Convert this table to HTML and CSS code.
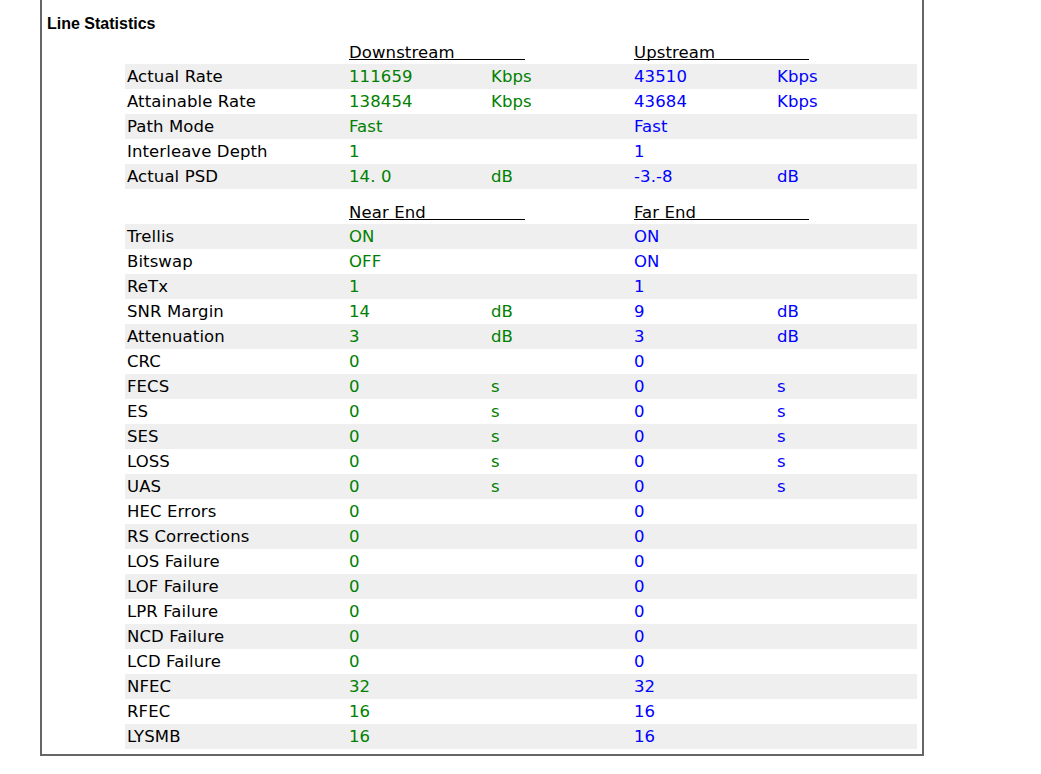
FILE: index.html
```html
<!DOCTYPE html>
<html>
<head>
<meta charset="utf-8">
<title>Line Statistics</title>
<link rel="stylesheet" href="styles.css">
</head>
<body>
<div class="frame">
  <div class="title">Line Statistics</div>
  <table class="stats">
    <colgroup>
      <col class="c-label"><col class="c-val"><col class="c-unit"><col class="c-val2"><col class="c-unit2">
    </colgroup>
    <tbody>
      <tr class="head first"><td></td><td colspan="2"><div class="uline">Downstream</div></td><td colspan="2"><div class="uline up">Upstream</div></td></tr>
      <tr class="odd"><td class="lbl">Actual Rate</td><td class="g">111659</td><td class="g">Kbps</td><td class="b">43510</td><td class="b">Kbps</td></tr>
      <tr><td class="lbl">Attainable Rate</td><td class="g">138454</td><td class="g">Kbps</td><td class="b">43684</td><td class="b">Kbps</td></tr>
      <tr class="odd"><td class="lbl">Path Mode</td><td class="g">Fast</td><td class="g"></td><td class="b">Fast</td><td class="b"></td></tr>
      <tr><td class="lbl">Interleave Depth</td><td class="g">1</td><td class="g"></td><td class="b">1</td><td class="b"></td></tr>
      <tr class="odd"><td class="lbl">Actual PSD</td><td class="g">14. 0</td><td class="g">dB</td><td class="b">-3.-8</td><td class="b">dB</td></tr>
      <tr class="head"><td></td><td colspan="2"><div class="uline">Near End</div></td><td colspan="2"><div class="uline up">Far End</div></td></tr>
      <tr class="odd"><td class="lbl">Trellis</td><td class="g">ON</td><td class="g"></td><td class="b">ON</td><td class="b"></td></tr>
      <tr><td class="lbl">Bitswap</td><td class="g">OFF</td><td class="g"></td><td class="b">ON</td><td class="b"></td></tr>
      <tr class="odd"><td class="lbl">ReTx</td><td class="g">1</td><td class="g"></td><td class="b">1</td><td class="b"></td></tr>
      <tr><td class="lbl">SNR Margin</td><td class="g">14</td><td class="g">dB</td><td class="b">9</td><td class="b">dB</td></tr>
      <tr class="odd"><td class="lbl">Attenuation</td><td class="g">3</td><td class="g">dB</td><td class="b">3</td><td class="b">dB</td></tr>
      <tr><td class="lbl">CRC</td><td class="g">0</td><td class="g"></td><td class="b">0</td><td class="b"></td></tr>
      <tr class="odd"><td class="lbl">FECS</td><td class="g">0</td><td class="g">s</td><td class="b">0</td><td class="b">s</td></tr>
      <tr><td class="lbl">ES</td><td class="g">0</td><td class="g">s</td><td class="b">0</td><td class="b">s</td></tr>
      <tr class="odd"><td class="lbl">SES</td><td class="g">0</td><td class="g">s</td><td class="b">0</td><td class="b">s</td></tr>
      <tr><td class="lbl">LOSS</td><td class="g">0</td><td class="g">s</td><td class="b">0</td><td class="b">s</td></tr>
      <tr class="odd"><td class="lbl">UAS</td><td class="g">0</td><td class="g">s</td><td class="b">0</td><td class="b">s</td></tr>
      <tr><td class="lbl">HEC Errors</td><td class="g">0</td><td class="g"></td><td class="b">0</td><td class="b"></td></tr>
      <tr class="odd"><td class="lbl">RS Corrections</td><td class="g">0</td><td class="g"></td><td class="b">0</td><td class="b"></td></tr>
      <tr><td class="lbl">LOS Failure</td><td class="g">0</td><td class="g"></td><td class="b">0</td><td class="b"></td></tr>
      <tr class="odd"><td class="lbl">LOF Failure</td><td class="g">0</td><td class="g"></td><td class="b">0</td><td class="b"></td></tr>
      <tr><td class="lbl">LPR Failure</td><td class="g">0</td><td class="g"></td><td class="b">0</td><td class="b"></td></tr>
      <tr class="odd"><td class="lbl">NCD Failure</td><td class="g">0</td><td class="g"></td><td class="b">0</td><td class="b"></td></tr>
      <tr><td class="lbl">LCD Failure</td><td class="g">0</td><td class="g"></td><td class="b">0</td><td class="b"></td></tr>
      <tr class="odd"><td class="lbl">NFEC</td><td class="g">32</td><td class="g"></td><td class="b">32</td><td class="b"></td></tr>
      <tr><td class="lbl">RFEC</td><td class="g">16</td><td class="g"></td><td class="b">16</td><td class="b"></td></tr>
      <tr class="odd"><td class="lbl">LYSMB</td><td class="g">16</td><td class="g"></td><td class="b">16</td><td class="b"></td></tr>
    </tbody>
  </table>
</div>
</body>
</html>
```

FILE: styles.css
```css
html, body {
  margin: 0;
  padding: 0;
  background: #ffffff;
}

body {
  font-family: "DejaVu Sans", Verdana, sans-serif;
  font-size: 16.5px;
  letter-spacing: 0.1px;
  color: #000000;
}

.frame {
  margin-left: 40px;
  width: 880px;
  border: 2px solid #666666;
  border-top: none;
  padding-bottom: 5px;
}

.title {
  font-family: "Liberation Sans", Arial, sans-serif;
  font-weight: bold;
  font-size: 16px;
  letter-spacing: 0;
  line-height: 13px;
  padding: 17px 0 0 5px;
}

.stats {
  margin-left: 83px;
  width: 792px;
  border-collapse: collapse;
  border-spacing: 0;
  table-layout: fixed;
}

.c-label { width: 222px; }
.c-val { width: 142px; }
.c-unit { width: 143px; }
.c-val2 { width: 143px; }
.c-unit2 { width: 142px; }

.stats td {
  padding: 1px 0 0 2px;
  line-height: 24px;
  height: 24px;
  white-space: nowrap;
  vertical-align: top;
}

.stats tr.odd td {
  background: #efefef;
}

.stats tr.head td {
  padding: 17px 0 4px 2px;
  height: auto;
  line-height: 13px;
  vertical-align: bottom;
}

.stats tr.head.first td {
  padding-top: 16px;
}

.uline {
  width: 176px;
  line-height: 13px;
  border-bottom: 1px solid #000000;
}

.uline.up {
  width: 175px;
}

.g { color: #008000; }
.b { color: #0000ff; }
```
